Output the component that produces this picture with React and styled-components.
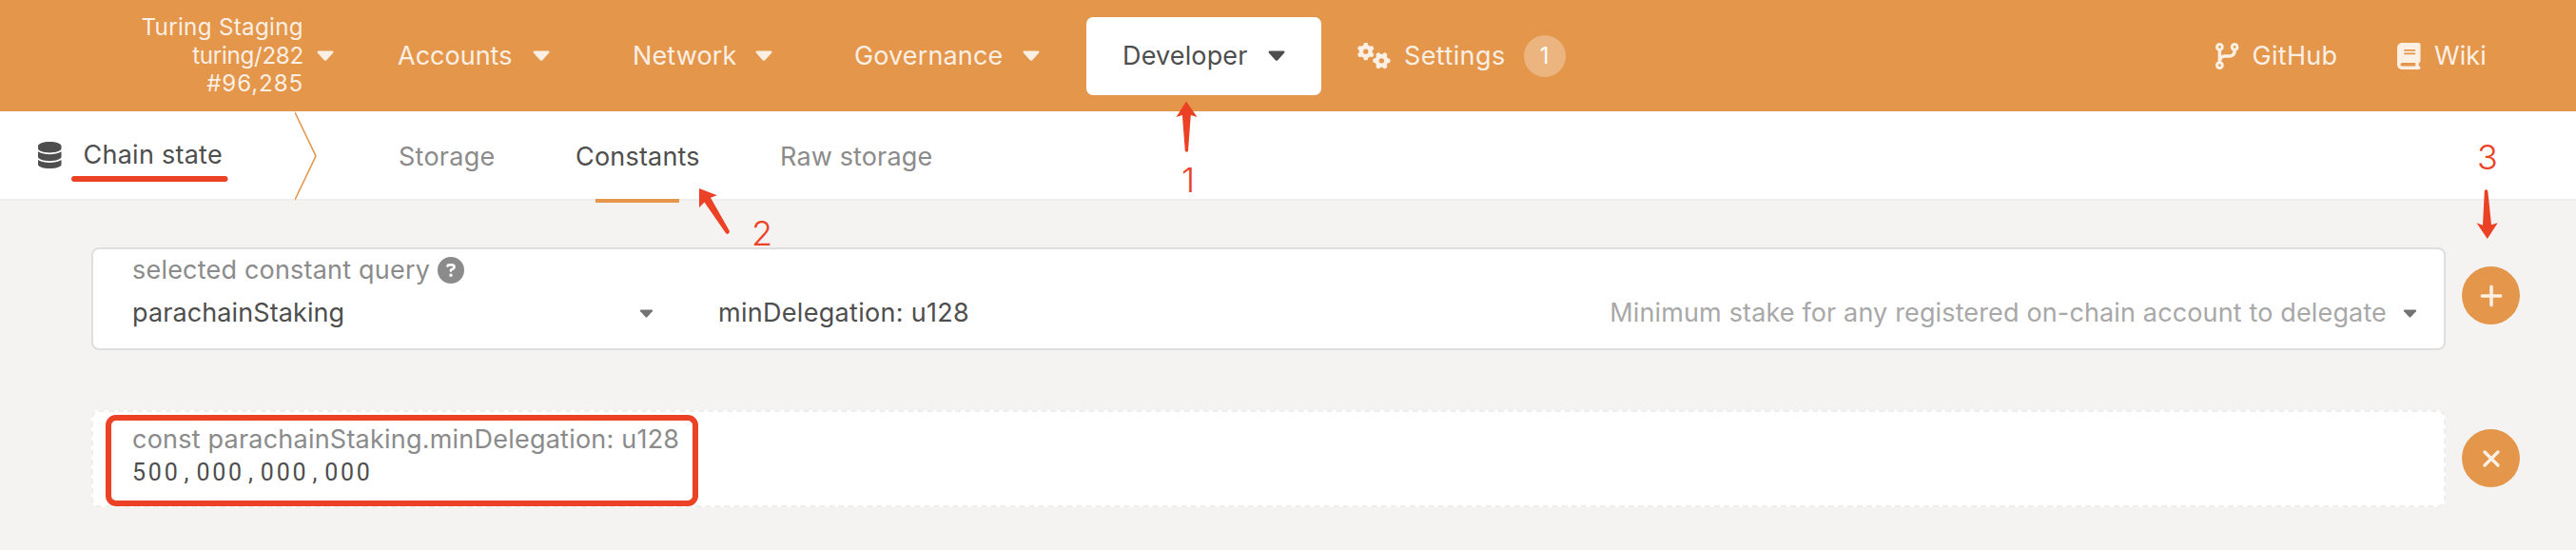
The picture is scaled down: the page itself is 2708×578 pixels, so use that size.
import React from 'react';
import styled, { createGlobalStyle, css } from 'styled-components';
import { FaDatabase, FaCodeBranch, FaBook, FaGears, FaCircleQuestion } from 'react-icons/fa6';

const orange = '#e4964a';
const cream = '#fcefe4';
const dark = '#4e4e4e';
const red = '#eb4125';

const Global = createGlobalStyle`
  * { box-sizing: border-box; }
  body { margin: 0; background: #f4f3f1; }
`;

const Page = styled.div`
  position: relative;
  width: 2708px;
  height: 578px;
  overflow: hidden;
  background: #f4f3f1;
  font-family: Inter, 'Liberation Sans', sans-serif;
  font-size: 27px;
  color: ${dark};
  white-space: nowrap;
`;

const Text = styled.span`
  letter-spacing: ${(p) => p.$ls ?? 0.14}px;
  line-height: 32px;
`;

const TopBar = styled.header`
  display: flex;
  align-items: center;
  height: 117px;
  padding: 0 94px 0 148px;
  background: ${orange};
  color: ${cream};
`;

const ChainInfo = styled.div`
  display: flex;
  align-items: center;
  justify-content: flex-end;
  width: 203px;
  gap: 14px;
  margin-right: 67px;
`;

const ChainLines = styled.div`
  display: flex;
  flex-direction: column;
  align-items: flex-end;
  font-size: 24.2px;
`;

const ChainLine = styled.span`
  line-height: 29.4px;
  letter-spacing: ${(p) => p.$ls}px;
`;

const NavItem = styled.div`
  display: flex;
  align-items: center;
  justify-content: space-between;
  height: 82px;
  width: ${(p) => p.$w}px;
  margin-right: ${(p) => p.$gap}px;
  padding: 0 ${(p) => p.$pad || 0}px;
  ${(p) => p.$active && css`
    background: #fff;
    color: ${dark};
    border-radius: 7px;
  `}
`;

const SettingsItem = styled.div`
  display: flex;
  align-items: center;
  gap: 14px;
`;

const Badge = styled.span`
  display: flex;
  align-items: center;
  justify-content: center;
  width: 44px;
  height: 44px;
  margin-left: 5px;
  border-radius: 50%;
  background: #ecb580;
  color: #fff;
  font-size: 23.7px;
`;

const Links = styled.div`
  display: flex;
  margin-left: auto;
  gap: 63px;
`;

const iconSize = css`
  & > svg {
    width: 24.5px;
    height: 28px;
  }
`;

const Link = styled.div`
  display: flex;
  align-items: center;
  gap: 14px;
  ${iconSize}
`;

const TabBar = styled.nav`
  display: flex;
  height: 94px;
  background: #fff;
  border-bottom: 2px solid #efeeed;
`;

const TabTitle = styled.div`
  display: flex;
  align-items: center;
  gap: 23px;
  width: 310px;
  padding-left: 40px;
  ${iconSize}
`;

const Tab = styled.div`
  position: relative;
  display: flex;
  align-items: center;
  height: 95px;
  margin-right: ${(p) => p.$gap}px;
  width: ${(p) => p.$w}px;
  color: ${(p) => (p.$active ? dark : '#8b8b8b')};
  ${(p) => p.$active && css`
    &::after {
      content: '';
      position: absolute;
      left: 21px;
      right: 21px;
      bottom: -1px;
      height: 4px;
      background: ${orange};
    }
  `}
`;

const Main = styled.main`
  display: flex;
  flex-direction: column;
  gap: 63px;
  padding: 49px 59px 0 96px;
`;

const Row = styled.div`
  display: flex;
  align-items: center;
  gap: 17px;
`;

const QueryCard = styled.section`
  display: flex;
  flex-direction: column;
  width: 2475px;
  height: 108px;
  padding: 6px 28px 0 41px;
  background: #fff;
  border: 2px solid #dededf;
  border-radius: 8px;
`;

const Label = styled.div`
  display: flex;
  align-items: center;
  gap: 8px;
  height: 32px;
  color: #8b8b8b;
`;

const Fields = styled.div`
  display: flex;
  align-items: center;
  justify-content: space-between;
  margin-top: 13px;
  height: 32px;
`;

const Select = styled.div`
  display: flex;
  align-items: center;
  justify-content: space-between;
  width: ${(p) => p.$w}px;
  margin-left: ${(p) => p.$ml || 0}px;
`;

const Hint = styled.div`
  display: flex;
  align-items: center;
  gap: 17px;
  margin-left: auto;
  color: #a8a8a8;
`;

const ResultCard = styled.section`
  display: flex;
  flex-direction: column;
  width: 2475px;
  height: 102px;
  padding: 13px 41px 0;
  background: #fff;
  border: 2px dashed #eeeeee;
  border-radius: 8px;
  color: #8b8b8b;
`;

const Amount = styled.div`
  margin-top: 3px;
  font-family: Roboto, sans-serif;
  font-size: 25px;
  letter-spacing: 2.8px;
  line-height: 32px;
  color: ${dark};
`;

const Comma = styled.span`
  display: inline-block;
  width: 16.84px;
  padding-right: 1px;
  text-align: center;
`;

const RoundButton = styled.button`
  display: flex;
  align-items: center;
  justify-content: center;
  width: 61px;
  height: 61px;
  margin: 0 0 ${(p) => p.$lift || 0}px;
  padding: 0;
  border: 0;
  border-radius: 50%;
  background: ${orange};
`;

const Overlay = styled.svg`
  position: absolute;
  inset: 0;
  pointer-events: none;
`;

const Step = styled.span`
  position: absolute;
  left: ${(p) => p.$x}px;
  top: ${(p) => p.$y}px;
  font-size: 36px;
  font-weight: 350;
  line-height: 44px;
  color: ${red};
`;

const Highlight = styled.div`
  position: absolute;
  left: 111px;
  top: 436px;
  width: 623px;
  height: 96px;
  border: 6px solid ${red};
  border-radius: 11px;
`;

const Caret = ({ w = 18, h = 11.5, color = 'currentColor' }) => (
  <svg width={w} height={h} viewBox="0 0 18 11.5">
    <path d="M1.5.5H16.5Q18.2 1.2 17 2.8L10 10.4Q9 11.3 8 10.4L1 2.8Q-.2 1.2 1.5.5Z" fill={color} />
  </svg>
);

export default function App() {
  return (
    <Page>
      <Global />
      <TopBar>
        <ChainInfo>
          <ChainLines>
            <ChainLine $ls={0.3}>Turing Staging</ChainLine>
            <ChainLine $ls={-0.3}>turing/282</ChainLine>
            <ChainLine $ls={0.85}>#96,285</ChainLine>
          </ChainLines>
          <Caret />
        </ChainInfo>
        <NavItem $w={160} $gap={87}><Text $ls={0}>Accounts</Text><Caret /></NavItem>
        <NavItem $w={147} $gap={86}><Text>Network</Text><Caret /></NavItem>
        <NavItem $w={195} $gap={49}><Text>Governance</Text><Caret /></NavItem>
        <NavItem $w={247} $gap={38} $pad={38} $active><Text>Developer</Text><Caret /></NavItem>
        <SettingsItem>
          <FaGears size={35} />
          <Text $ls={0.4}>Settings</Text>
          <Badge>1</Badge>
        </SettingsItem>
        <Links>
          <Link><FaCodeBranch /><Text $ls={0.3}>GitHub</Text></Link>
          <Link><FaBook /><Text>Wiki</Text></Link>
        </Links>
      </TopBar>
      <TabBar>
        <TabTitle><FaDatabase /><Text $ls={0.25}>Chain state</Text></TabTitle>
        <svg width="109" height="94" viewBox="0 0 109 94">
          <path d="M0 1L22 47L0 93" fill="none" stroke={orange} strokeWidth="1.6" />
        </svg>
        <Tab $w={101} $gap={85}><Text $ls={0.25}>Storage</Text></Tab>
        <Tab $w={130} $gap={85} $active><Text $ls={0.2}>Constants</Text></Tab>
        <Tab $w={160} $gap={0}><Text>Raw storage</Text></Tab>
      </TabBar>
      <Main>
        <Row>
          <QueryCard>
            <Label><Text $ls={0.2}>selected constant query</Text><FaCircleQuestion size={28} /></Label>
            <Fields>
              <Select $w={548}><Text $ls={0.1}>parachainStaking</Text><Caret w={15} h={9} color="#727272" /></Select>
              <Select $w={330} $ml={68}><Text $ls={0.3}>minDelegation: u128</Text></Select>
              <Hint><Text>Minimum stake for any registered on-chain account to delegate</Text><Caret w={15} h={9} color="#727272" /></Hint>
            </Fields>
          </QueryCard>
          <RoundButton $lift={7}>
            <svg width="24" height="24" viewBox="0 0 24 24" stroke={cream} strokeWidth="3.6" strokeLinecap="round"><path d="M12 2.4V21.6M2.4 12H21.6" /></svg>
          </RoundButton>
        </Row>
        <Row>
          <ResultCard>
            <Text $ls={0.22}>const parachainStaking.minDelegation: u128</Text>
            <Amount>500<Comma>,</Comma>000<Comma>,</Comma>000<Comma>,</Comma>000</Amount>
          </ResultCard>
          <RoundButton $lift={1}>
            <svg width="24" height="24" viewBox="0 0 24 24" stroke={cream} strokeWidth="3.4" strokeLinecap="round"><path d="M5 5L19 19M19 5L5 19" /></svg>
          </RoundButton>
        </Row>
      </Main>
      <Overlay width="2708" height="578" viewBox="0 0 2708 578" fill={red}>
        <path d="M78 188H236.5" stroke={red} strokeWidth="6" strokeLinecap="round" />
        <path d="M1247 106.5L1258.5 123L1251.8 121L1249 158.5Q1247.3 161 1245.8 158.5L1242.9 121L1236.5 123Z" />
        <path d="M735 198L753.8 205.2L747 207.7L767 243Q766 247.5 763 245L740.5 212.5L735 218Z" />
        <path d="M2614.8 251L2603.5 234.3L2610 236.7L2611.8 200.5Q2613.5 198 2615.3 200.5L2619 236.2L2625.7 234.3Z" />
      </Overlay>
      <Highlight />
      <Step $x={1242} $y={167}>1</Step>
      <Step $x={790} $y={223}>2</Step>
      <Step $x={2604} $y={143}>3</Step>
    </Page>
  );
}
